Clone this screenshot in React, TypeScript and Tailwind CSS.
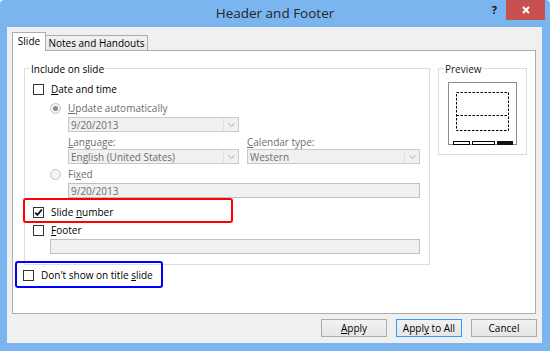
import React from "react";

function CheckBox({ checked = false }: { checked?: boolean }) {
  return (
    <span className="flex h-[11px] w-[11px] shrink-0 items-center justify-center border border-[#333333] bg-white">
      {checked && (
        <svg width="9" height="9" viewBox="0 0 9 9">
          <path d="M1.2 4.6 L3.4 6.9 L7.8 1.6" fill="none" stroke="#111" strokeWidth="1.7" />
        </svg>
      )}
    </span>
  );
}

function Radio({ checked = false }: { checked?: boolean }) {
  return (
    <span className="flex h-[11px] w-[11px] shrink-0 items-center justify-center rounded-full border border-[#c4c4c4] bg-[#f4f4f4]">
      {checked && <span className="h-[5px] w-[5px] rounded-full bg-[#8a8a8a]" />}
    </span>
  );
}

function Combo({ value, className }: { value: string; className: string }) {
  return (
    <div className={`flex h-[15px] shrink-0 items-stretch border border-[#c9c9c9] bg-[#f0f0f0] ${className}`}>
      <span className="flex flex-1 items-center pl-[2px] leading-none text-[#6d6d6d]">{value}</span>
      <span className="flex w-[15px] items-center justify-center border-l border-[#e2e2e2]">
        <svg width="7" height="4" viewBox="0 0 7 4">
          <path d="M0.5 0.5 L3.5 3.3 L6.5 0.5" fill="none" stroke="#a8a8a8" strokeWidth="1" />
        </svg>
      </span>
    </div>
  );
}

function TextBox({ value = "", className }: { value?: string; className: string }) {
  return (
    <div className={`flex h-[15px] shrink-0 items-center border border-[#c0c0c0] bg-[#f0f0f0] pl-[2px] leading-none text-[#6d6d6d] ${className}`}>
      {value}
    </div>
  );
}

function Button({ children, focused = false }: { children: React.ReactNode; focused?: boolean }) {
  return (
    <div
      className={`flex h-[18px] w-[66px] items-center justify-center border bg-gradient-to-b from-[#f2f2f2] to-[#e6e6e6] leading-none ${
        focused ? "border-[#3399ff]" : "border-[#acacac]"
      }`}
    >
      <span>{children}</span>
    </div>
  );
}

function PreviewDrawing() {
  return (
    <svg width="67" height="62" viewBox="0 0 67 62">
      <rect x="7.5" y="9.5" width="52" height="38" fill="none" stroke="#000" strokeWidth="1" strokeDasharray="2.5 1.5" />
      <line x1="7.5" y1="32.5" x2="59.5" y2="32.5" stroke="#000" strokeWidth="1" strokeDasharray="2.5 1.5" />
      <rect x="4.5" y="58.5" width="16" height="3" fill="#fff" stroke="#000" strokeWidth="1" />
      <rect x="23.5" y="58.5" width="22" height="3" fill="#fff" stroke="#000" strokeWidth="1" />
      <rect x="48" y="58" width="16" height="4" fill="#111" />
    </svg>
  );
}

export default function App() {
  return (
    <div className="relative flex h-[351px] w-[550px] flex-col overflow-hidden rounded-t-[4px] bg-[#7ab5ef] font-['Open_Sans',sans-serif] text-[10px] text-black">
      {/* title bar */}
      <div className="grid h-[27px] shrink-0 grid-cols-[1fr_auto_1fr]">
        <div />
        <div className="flex items-center pb-[1px] text-[13.5px] text-[#262626]">Header and Footer</div>
        <div className="flex items-start justify-end">
          <span className="mr-[9px] mt-[2px] text-[11px] font-bold text-[#111]">?</span>
          <div className="mr-[5px] flex h-[20px] w-[39px] items-center justify-center bg-[#c75050]">
            <svg width="8" height="8" viewBox="0 0 8 8">
              <path d="M1 1 L7 7 M7 1 L1 7" stroke="#fff" strokeWidth="2" />
            </svg>
          </div>
        </div>
      </div>

      {/* client area */}
      <div className="mb-[8px] ml-[7px] mr-[8px] flex flex-1 flex-col bg-[#f0f0f0] pl-[5px] pr-[6px] pt-[5px]">
        {/* tabs */}
        <div className="flex h-[18px] items-end">
          <div className="relative z-10 -mb-px flex h-[19px] w-[34px] items-center justify-center border border-b-0 border-[#acacac] bg-white pb-[1px]">
            Slide
          </div>
          <div className="flex h-[15px] w-[102px] items-center justify-center border border-b-0 border-l-0 border-[#acacac] bg-gradient-to-b from-[#f2f2f2] to-[#e8e8e8]">
            Notes and Handouts
          </div>
        </div>

        {/* panel */}
        <div className="flex h-[264px] w-[524px] flex-col border border-[#acacac] bg-white pl-[11px] pt-[17px]">
          <div className="flex gap-[8px]">
            {/* include on slide */}
            <div className="relative flex h-[197px] w-[406px] flex-col border border-[#dcdcdc]">
              <span className="absolute -top-[7px] left-[5px] bg-white px-[1px] leading-[14px]">Include on slide</span>

              <div className="ml-[8px] mt-[14px] flex h-[12px] items-center gap-[7px]">
                <CheckBox />
                <span>
                  <u>D</u>ate and time
                </span>
              </div>

              <div className="ml-[25px] mt-[7px] flex h-[12px] items-center gap-[7px] text-[#6d6d6d]">
                <Radio checked />
                <span>
                  <u>U</u>pdate automatically
                </span>
              </div>

              <Combo value="9/20/2013" className="ml-[43px] mt-[3px] w-[171px]" />

              <div className="ml-[43px] mt-[4px] flex h-[12px] items-center text-[#6d6d6d]">
                <span className="w-[179px]">
                  <u>L</u>anguage:
                </span>
                <span>
                  <u>C</u>alendar type:
                </span>
              </div>

              <div className="ml-[43px] mt-[1px] flex gap-[8px]">
                <Combo value="English (United States)" className="w-[171px]" />
                <Combo value="Western" className="w-[173px]" />
              </div>

              <div className="ml-[25px] mt-[4px] flex h-[12px] items-center gap-[7px] text-[#6d6d6d]">
                <Radio />
                <span>
                  Fi<u>x</u>ed
                </span>
              </div>

              <TextBox value="9/20/2013" className="ml-[43px] mt-[3px] w-[352px]" />

              <div className="ml-[8px] mt-[8px] flex h-[12px] items-center gap-[7px]">
                <CheckBox checked />
                <span>
                  Slide <u>n</u>umber
                </span>
              </div>

              <div className="ml-[8px] mt-[6px] flex h-[12px] items-center gap-[7px]">
                <CheckBox />
                <span>
                  <u>F</u>ooter
                </span>
              </div>

              <TextBox className="ml-[25px] mt-[3px] w-[370px]" />
            </div>

            {/* preview */}
            <div className="relative h-[87px] w-[89px] border border-[#dcdcdc] pl-[9px] pt-[13px]">
              <span className="absolute -top-[7px] left-[5px] bg-white px-[1px] leading-[14px] text-[#1a1a1a]">Preview</span>
              <div className="h-[63px] w-[69px] border border-[#8c8c8c] bg-white">
                <PreviewDrawing />
              </div>
            </div>
          </div>

          <div className="-ml-px mt-[4px] flex h-[12px] items-center gap-[7px]">
            <CheckBox />
            <span>
              Don't show on title <u>s</u>lide
            </span>
          </div>
        </div>

        {/* buttons */}
        <div className="-mr-px mt-[5px] flex justify-end gap-[9px]">
          <Button>
            <u>A</u>pply
          </Button>
          <Button focused>
            Appl<u>y</u> to All
          </Button>
          <Button>Cancel</Button>
        </div>
      </div>

      {/* annotation boxes */}
      <div className="pointer-events-none absolute left-[23px] top-[198px] h-[25px] w-[210px] rounded-[3px] border-2 border-[#ff0000]" />
      <div className="pointer-events-none absolute left-[15px] top-[261px] h-[27px] w-[148px] rounded-[3px] border-2 border-[#0000ff]" />
    </div>
  );
}
